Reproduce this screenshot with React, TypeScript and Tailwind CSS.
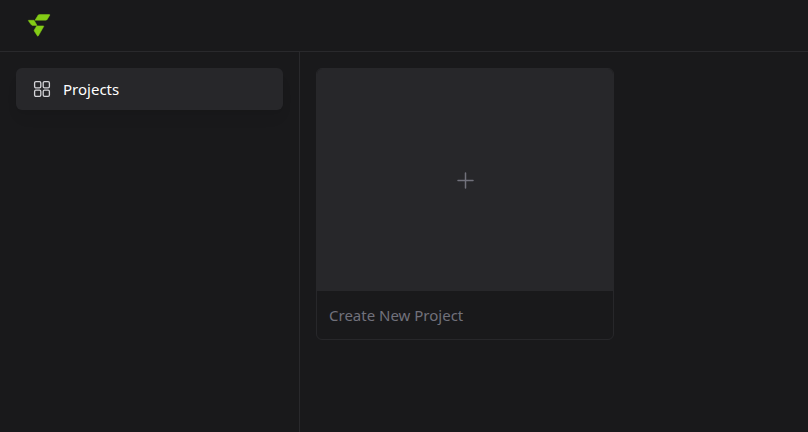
import type { ReactNode } from 'react';

function Logo() {
  return (
    <svg width="24" height="24" viewBox="0 0 24 24" fill="#84cc16" stroke="#84cc16" strokeWidth=".5" strokeLinejoin="round" aria-hidden="true">
      <path d="M11.1 1.3Q11.6 .6 12.5 .6H22.4Q23.1 .6 22.7 1.3L20.2 5.4Q19.7 6.2 18.8 6.2H8Z" />
      <path d="M1.6 6.3H7.1L10 11.4H5.5Q4.6 11.4 4.1 10.6L1.4 6.8Q1.2 6.3 1.6 6.3Z" />
      <path d="M9.7 11.9H16.4Q17.1 11.9 16.7 12.6L11.4 21.8Q10.8 22.6 10.3 21.8L7.4 17.3Q6.9 16.6 7.3 15.9Z" />
    </svg>
  );
}

function GridIcon() {
  return (
    <svg width="18" height="18" viewBox="0 0 18 18" fill="none" stroke="currentColor" strokeWidth="1.3" aria-hidden="true">
      <rect x="1.6" y="1.6" width="6.2" height="6.2" rx="1.3" />
      <rect x="10.2" y="1.6" width="6.2" height="6.2" rx="1.3" />
      <rect x="1.6" y="10.2" width="6.2" height="6.2" rx="1.3" />
      <rect x="10.2" y="10.2" width="6.2" height="6.2" rx="1.3" />
    </svg>
  );
}

function PlusIcon() {
  return (
    <svg width="24" height="24" viewBox="0 0 24 24" fill="none" stroke="currentColor" strokeWidth="1.5" strokeLinecap="round" aria-hidden="true">
      <path d="M12.5 5v15M5 12.5h15" />
    </svg>
  );
}

function SidebarLink({ icon, children }: { icon: ReactNode; children: ReactNode }) {
  return (
    <a
      href="#projects"
      className="flex items-center gap-3 rounded-md bg-[#27272a] px-4 py-2 text-[15px] leading-[26px] text-white shadow-lg shadow-black/5"
    >
      <span className="pl-px text-zinc-300">{icon}</span>
      {children}
    </a>
  );
}

export default function App() {
  return (
    <div className="flex min-h-screen flex-col bg-[#19191b] font-['Noto_Sans','Open_Sans',sans-serif]">
      <header className="flex h-13 items-center border-b border-[#29292c] px-4">
        <a href="#home" aria-label="Home" className="px-[11px]">
          <Logo />
        </a>
      </header>

      <div className="flex flex-1">
        <nav className="w-75 shrink-0 border-r border-[#29292c] p-4">
          <SidebarLink icon={<GridIcon />}>Projects</SidebarLink>
        </nav>

        <main className="flex-1 p-4">
          <button className="block w-full max-w-[298px] overflow-hidden rounded-md border border-[#27272a] text-left text-zinc-500">
            <span className="flex aspect-4/3 items-center justify-center bg-[#27272a]">
              <PlusIcon />
            </span>
            <span className="block p-3 text-[15px] leading-6">Create New Project</span>
          </button>
        </main>
      </div>
    </div>
  );
}
